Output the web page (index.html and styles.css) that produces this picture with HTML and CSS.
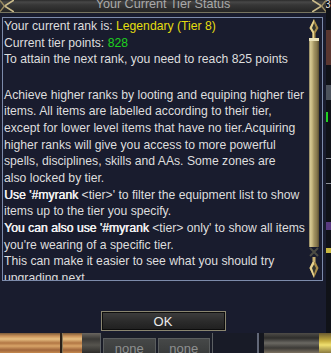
FILE: index.html
```html
<!DOCTYPE html>
<html>
<head>
<meta charset="utf-8">
<link rel="stylesheet" href="styles.css">
</head>
<body>
<div class="screen">
  <div class="top">
    <div class="window">
      <div class="titlebar">
        <svg class="cap" width="14" height="12" viewBox="0 0 14 12">
          <polyline points="14,0 4.5,6 14,12" fill="none" stroke="#cbbb8a" stroke-width="1.6"/>
          <polyline points="0,0.5 4.5,6 0,11.5" fill="none" stroke="#9c8c62" stroke-width="1.4"/>
        </svg>
        <span class="title">Your Current Tier Status</span>
        <svg class="cap" width="14" height="12" viewBox="0 0 14 12">
          <polyline points="0,0 9.5,6 0,12" fill="none" stroke="#cbbb8a" stroke-width="1.6"/>
          <polyline points="14,0.5 9.5,6 14,11.5" fill="none" stroke="#9c8c62" stroke-width="1.4"/>
        </svg>
      </div>
      <div class="box">
        <div class="text">
          <p>Your current rank is: <span class="yellow">Legendary (Tier 8)</span><br>Current tier points: <span class="green">828</span><br>To attain the next rank, you need to reach 825 points</p>
          <p class="para">Achieve higher ranks by looting and equiping higher tier<br>items. All items are labelled according to their tier,<br>except for lower level items that have no tier.Acquiring<br>higher ranks will give you access to more powerful<br>spells, disciplines, skills and AAs. Some zones are<br>also locked by tier.<br><b>Use '#myrank</b> &lt;tier&gt;' to filter the equipment list to show<br>items up to the tier you specify.<br><b>You can also use '#myrank</b> &lt;tier&gt; only' to show all items<br>you're wearing of a specific tier.<br>This can make it easier to see what you should try<br>upgrading next.</p>
        </div>
        <div class="scrollbar">
          <svg width="10" height="22" viewBox="0 0 10 22">
            <path d="M5 0 L9.5 9 L6.5 14 L6.5 19 L3.5 19 L3.5 14 L0.5 9 Z" fill="#a88c48"/>
            <path d="M5 0 L5 19 L3.5 19 L3.5 14 L0.5 9 Z" fill="#e6d290"/>
            <path d="M5 4 L7 9 L5 12.5 L3 9 Z" fill="#34352e"/>
            <rect x="0" y="19" width="10" height="3" fill="#ece2b8"/>
          </svg>
          <div class="track"></div>
          <svg width="10" height="31" viewBox="0 0 10 31">
            <path d="M1 1 L9 9 M9 1 L1 9" stroke="#4c4c44" stroke-width="2"/>
            <rect x="3.5" y="10" width="3" height="5" fill="#c8b070"/>
            <path d="M5 31 L9.5 21 L6.5 15 L3.5 15 L0.5 21 Z" fill="#a88c48"/>
            <path d="M5 31 L5 15 L3.5 15 L0.5 21 Z" fill="#e6d290"/>
            <path d="M5 27 L7 21 L5 17.5 L3 21 Z" fill="#34352e"/>
          </svg>
        </div>
      </div>
      <div class="footer">
        <button class="ok">OK</button>
      </div>
    </div>
    <div class="strip">
      <span class="s-digit">3</span>
      <span class="s-gap1"></span>
      <span class="s-red"></span>
      <span class="s-gap2"></span>
      <span class="s-grey"></span>
      <span class="s-gap3"></span>
      <span class="s-green"></span>
      <span class="s-gap4"></span>
      <span class="s-line"></span>
      <span class="s-gap5"></span>
      <span class="s-line"></span>
      <span class="s-gap6"></span>
      <span class="s-purple"></span>
      <span class="s-gap7"></span>
      <span class="s-yellow"></span>
      <span class="s-rest"></span>
    </div>
  </div>
  <div class="ground">
    <div class="sand sand-a"></div>
    <div class="post"></div>
    <div class="sand sand-b"></div>
    <div class="figure"></div>
    <div class="hotbar">
      <span class="hot">none</span>
      <span class="hot">none</span>
    </div>
    <div class="dark-gap"></div>
    <div class="divider"></div>
    <div class="dark-gap2"></div>
    <div class="figure2"></div>
    <div class="gold"></div>
  </div>
</div>
</body>
</html>
```
FILE: styles.css
```css
html, body {
  margin: 0;
  padding: 0;
  background: #12141f;
}

.screen {
  width: 331px;
  height: 353px;
  overflow: hidden;
  display: flex;
  flex-direction: column;
  font-family: "Liberation Sans", Arial, sans-serif;
}

.top {
  display: flex;
  flex: none;
  height: 333px;
}

.window {
  width: 326px;
  height: 333px;
  flex: none;
  background: #191c2e;
  display: flex;
  flex-direction: column;
}

.titlebar {
  display: flex;
  flex: none;
  height: 12px;
  background: linear-gradient(#2a2a2a 0, #474747 2px, #363636 5px, #272727 11px);
  border-bottom: 1px solid #77745f;
  overflow: hidden;
}

.cap {
  flex: none;
  display: block;
}

.title {
  flex: 1;
  text-align: center;
  color: #a9a9a9;
  font-size: 12.6px;
  line-height: 9px;
  height: 12px;
  white-space: nowrap;
}

.box {
  flex: none;
  margin: 4px 0 0 2px;
  width: 319px;
  height: 262px;
  border: 1px solid #7d8bab;
  display: flex;
  overflow: hidden;
}

.text {
  flex: 1;
  min-width: 0;
  padding-left: 1px;
  color: #dedede;
  font-size: 12.2px;
  line-height: 16.67px;
  white-space: nowrap;
  overflow: hidden;
}

.text p {
  margin: 0;
}

.text .para {
  margin-top: 18.67px;
}

.text b {
  color: #f4f4f4;
  font-weight: normal;
  text-shadow: 0.4px 0 0 #f4f4f4;
}

.yellow {
  color: #e4dc10;
}

.green {
  color: #1ed21e;
}

.scrollbar {
  flex: none;
  width: 10px;
  margin: 1px 3px 2px 0;
  display: flex;
  flex-direction: column;
}

.scrollbar svg {
  display: block;
  flex: none;
}

.track {
  flex: 1;
  background: linear-gradient(to right, #6a6040 0, #d6ca96 1px, #c8b982 3px, #a39463 5px, #84764c 8px, #5a4e30 10px);
}

.footer {
  flex: 1;
  display: flex;
  justify-content: center;
  align-items: flex-end;
  padding-bottom: 2px;
}

.ok {
  width: 125px;
  height: 20px;
  box-sizing: border-box;
  border: 1px solid #8a8670;
  box-shadow: inset 0 0 0 1px #0d0d0d;
  background: linear-gradient(#3e3e3e, #2c2c2c 50%, #1f1f1f);
  color: #ececec;
  font-family: "Liberation Sans", Arial, sans-serif;
  font-size: 13px;
  line-height: 17px;
  padding: 0;
}

/* right edge strip: neighbouring game UI */
.strip {
  width: 5px;
  flex: none;
  display: flex;
  flex-direction: column;
  background: #101218;
  overflow: hidden;
}
.strip span { display: block; flex: none; }
.s-digit { height: 10px; color: #e0e0e0; font-size: 10px; line-height: 10px; overflow: hidden; text-indent: -1px; }
.s-gap1 { height: 20px; }
.s-red { height: 35px; background: #5a3630; }
.s-gap2 { height: 20px; }
.s-grey { height: 15px; background: #4c525c; }
.s-gap3 { height: 12px; }
.s-green { height: 10px; border-left: 2px solid #20d020; }
.s-gap4 { height: 36px; }
.s-line { height: 1px; background: #8a8e98; }
.s-gap5 { height: 24px; }
.s-gap6 { height: 38px; }
.s-purple { height: 8px; background: #5a3a80; }
.s-gap7 { height: 18px; }
.s-yellow { height: 5px; background: #c8b840; }
.s-rest { flex: 1; }

/* ground strip below the window */
.ground {
  display: flex;
  flex: none;
  height: 20px;
  overflow: hidden;
}
.sand {
  background: linear-gradient(#7a5a38 0, #c89058 3px, #e6bf82 6px, #b27644 10px, #d8a468 13px, #a0653a 17px, #c4884e 20px);
}
.sand-a { width: 60px; }
.post { width: 2px; background: #2a2018; border-right: 1px solid #8a7a5a; }
.sand-b { width: 19px; }
.figure {
  width: 18px;
  background: linear-gradient(#6a6660 0, #3a3936 6px, #56544e 12px, #2e2d2a 20px);
}
.hotbar {
  width: 107px;
  display: flex;
  gap: 2px;
  padding: 5px 2px 0 2px;
  background: #1a1d28;
  border-left: 1px solid #5c6064;
  border-right: 1px solid #5c6064;
}
.hot {
  flex: 1;
  background: linear-gradient(#464848, #3a3c3c);
  border: 1px solid #5a5d5e;
  border-bottom: none;
  color: #8e9090;
  font-size: 13px;
  line-height: 19px;
  text-align: center;
}
.dark-gap { width: 44px; background: #181b27; }
.divider { width: 2px; background: #626878; }
.dark-gap2 { width: 5px; background: #14161e; }
.figure2 {
  width: 55px;
  background: linear-gradient(#4e4c48 0, #2e2d2b 5px, #6a6862 10px, #3c3a36 15px, #7a7060 20px);
}
.gold {
  flex: 1;
  background: linear-gradient(#6a5a30, #c8b040 8px, #f0e070 12px, #8a7a40 20px);
}
```
